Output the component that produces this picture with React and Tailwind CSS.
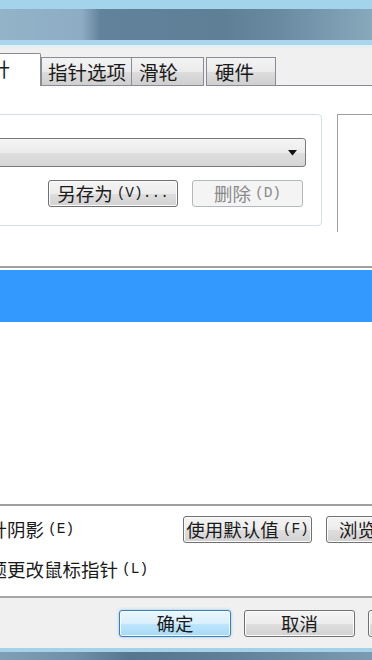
import React from 'react';

const hintFont = "font-['Liberation_Mono',monospace] text-[14.5px]";

function WinButton({ label, hint, className = '', disabled = false, focused = false }) {
  let look =
    'border-[#707070] bg-[linear-gradient(#f4f4f4_0%,#ececec_50%,#dedede_51%,#d2d2d2_100%)] shadow-[inset_0_0_0_1px_#fcfcfc] text-[#1a1a1a]';
  if (disabled) look = 'border-[#b4b8ba] bg-[#f4f4f4] text-[#8a8a8a]';
  if (focused)
    look =
      'border-[#3c7fb1] bg-[linear-gradient(#eaf6fd_0%,#d9f0fc_50%,#bee6fd_51%,#a7d9f5_100%)] shadow-[inset_0_0_0_1px_#f4fbff,0_0_3px_#7fc6ee] text-[#1a1a1a]';

  return (
    <div
      className={`shrink-0 h-[27px] rounded-[3px] border flex items-center justify-center whitespace-nowrap text-[18.5px] leading-none ${look} ${className}`}
    >
      <span>{label}</span>
      {hint && <span className={`ml-[4px] ${hintFont}`}>{hint}</span>}
    </div>
  );
}

function Tab({ label, className = '' }) {
  return (
    <div
      className={`shrink-0 h-[29px] border border-[#898c95] bg-[linear-gradient(#f3f3f3_0%,#ebebeb_50%,#dddddd_51%,#cfcfcf_100%)] flex items-center whitespace-nowrap text-[19.5px] leading-none text-[#1a1a1a] ${className}`}
    >
      {label}
    </div>
  );
}

export default function App() {
  return (
    <div className="w-[372px] h-[660px] overflow-hidden bg-[#f0f0f0] flex flex-col font-['Noto_Sans_CJK_SC','Noto_Sans',sans-serif] text-[#1a1a1a]">
      {/* blurred window title */}
      <div className="shrink-0">
        <div className="h-[9px] bg-[#a4d4ec]" />
        <div className="h-[31px] bg-[linear-gradient(90deg,#93b3c9_0%,#8eadc4_22%,#62829b_27%,#5f7f97_60%,#6a8aa2_75%,#88a8bc_100%)]" />
        <div className="h-[5px] bg-[#a9d6ec]" />
        <div className="h-[3px] bg-[#e6eef2]" />
      </div>

      {/* tabs */}
      <div className="h-[38px] shrink-0 flex items-end">
        <div className="shrink-0 w-[41px] h-[33px] bg-white border-t border-r border-[#898c95] rounded-tr-[2px] overflow-hidden pt-[4px] whitespace-nowrap">
          <span className="inline-block -ml-[29px] text-[19.5px] leading-none">指针</span>
        </div>
        <Tab label="指针选项" className="w-[91px] pl-[6px]" />
        <Tab label="滑轮" className="w-[73px] -ml-px pl-[7px]" />
        <Tab label="硬件" className="w-[70px] ml-[2px] pl-[8px]" />
        <div className="flex-1 border-b border-[#898c95]" />
      </div>

      {/* tab page */}
      <div className="h-[512px] shrink-0 bg-white border-b-2 border-[#a5a5a5] flex flex-col">
        <div className="mt-[28px] flex items-start">
          <div className="shrink-0 -ml-[20px] w-[342px] h-[112px] border border-[#d5dfe5] rounded-[4px] pt-[23px] pr-[15px]">
            <div className="h-[29px] rounded-[3px] border border-[#7a7a7a] bg-[linear-gradient(#f5f5f5_0%,#ebebeb_50%,#dedede_51%,#d6d6d6_100%)] flex items-center justify-end pr-[8px]">
              <svg width="9" height="6" viewBox="0 0 9 6">
                <polygon points="0,0 9,0 4.5,5.5" fill="#111" />
              </svg>
            </div>
            <div className="mt-[13px] flex justify-end gap-[14px] pr-[3px]">
              <WinButton label="另存为" hint="(V)..." className="w-[130px]" />
              <WinButton label="删除" hint="(D)" className="w-[111px]" disabled />
            </div>
          </div>
          <div className="shrink-0 ml-[15px] w-[60px] h-[118px] border-l border-t border-[#a0a0a0]" />
        </div>

        {/* cursor list */}
        <div className="mt-[34px] h-[240px] shrink-0 border-y-2 border-[#a0a0a0] pt-[2px]">
          <div className="h-[52px] bg-[#3399ff]" />
        </div>

        <div className="mt-[10px] h-[27px] shrink-0 flex items-center">
          <div className="w-[183px] shrink-0 whitespace-nowrap text-[18.5px] leading-none flex items-center">
            <span className="inline-block -ml-[67px]">启用指针阴影</span>
            <span className={`ml-[4px] ${hintFont}`}>(E)</span>
          </div>
          <WinButton label="使用默认值" hint="(F)" className="w-[129px]" />
          <WinButton label="浏览" hint="(B)..." className="w-[110px] ml-[14px] justify-start pl-[12px]" />
        </div>

        <div className="mt-[13px] h-[26px] shrink-0 flex items-center whitespace-nowrap text-[18.5px] leading-none">
          <span className="inline-block -ml-[67px]">允许主题更改鼠标指针</span>
          <span className={`ml-[4px] ${hintFont}`}>(L)</span>
        </div>
      </div>

      {/* dialog buttons */}
      <div className="h-[50px] shrink-0 pt-[12px] pl-[119px] flex gap-[13px]">
        <WinButton label="确定" className="w-[112px]" focused />
        <WinButton label="取消" className="w-[111px]" />
        <WinButton label="应用" hint="(A)" className="w-[110px] justify-start pl-[20px]" />
      </div>

      {/* blurred taskbar edge */}
      <div className="h-[4px] shrink-0 bg-[#a6d2e8]" />
      <div className="flex-1 bg-[linear-gradient(90deg,#7f9fb6_0%,#6f90a8_20%,#56768f_35%,#5f7f98_60%,#6d8da5_80%,#7c9bb2_100%)]" />
    </div>
  );
}
